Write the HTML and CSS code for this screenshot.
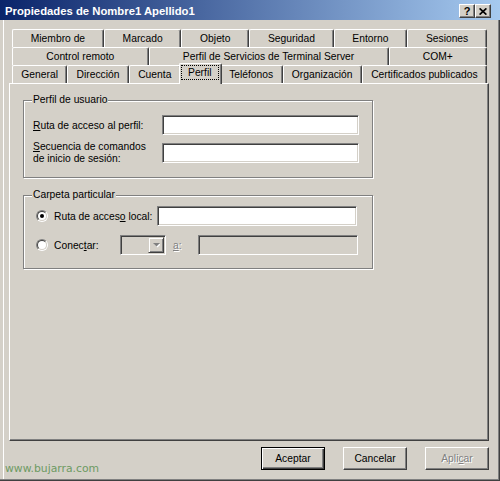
FILE: index.html
```html
<!DOCTYPE html>
<html lang="es">
<head>
<meta charset="utf-8">
<title>Propiedades de Nombre1 Apellido1</title>
<link rel="stylesheet" href="styles.css">
</head>
<body>
<div class="window">
  <div class="titlebar">
    <span class="title">Propiedades de Nombre1 Apellido1</span>
    <div class="tbtns">
      <span class="tbtn">?</span>
      <span class="tbtn"><svg width="8" height="7" viewBox="0 0 8 7"><path d="M0.6 0.4 L7.4 6.6 M7.4 0.4 L0.6 6.6" stroke="#000" stroke-width="1.7"/></svg></span>
    </div>
  </div>

  <div class="tabs">
    <div class="tabrow">
      <div class="tab">Miembro de</div>
      <div class="tab">Marcado</div>
      <div class="tab">Objeto</div>
      <div class="tab">Seguridad</div>
      <div class="tab">Entorno</div>
      <div class="tab">Sesiones</div>
    </div>
    <div class="tabrow">
      <div class="tab">Control remoto</div>
      <div class="tab">Perfil de Servicios de Terminal Server</div>
      <div class="tab">COM+</div>
    </div>
    <div class="tabrow">
      <div class="tab">General</div>
      <div class="tab">Dirección</div>
      <div class="tab">Cuenta</div>
      <div class="tab sel"><span class="focus">Perfil</span></div>
      <div class="tab">Teléfonos</div>
      <div class="tab">Organización</div>
      <div class="tab">Certificados publicados</div>
    </div>
  </div>

  <div class="panel">
    <div class="group g1">
      <span class="legend">Perfil de usuario</span>
      <div class="fields">
        <span class="lbl"><u>R</u>uta de acceso al perfil:</span>
        <div class="input"></div>
        <span class="lbl two"><u>S</u>ecuencia de comandos<br>de inicio de sesión:</span>
        <div class="input"></div>
      </div>
    </div>

    <div class="group g2">
      <span class="legend">Carpeta particular</span>
      <div class="row r1">
        <span class="radio checked"></span>
        <span class="rlabel">Ruta de acces<u>o</u> local:</span>
        <div class="input wide"></div>
      </div>
      <div class="row r2">
        <span class="radio"></span>
        <span class="rlabel">Conec<u>t</u>ar:</span>
        <div class="combo">
          <span class="cbtn"><svg width="7" height="5" viewBox="0 0 7 5"><path d="M1 1 H8 L4.5 4.5 Z" fill="#fff"/><path d="M0 0 H7 L3.5 3.5 Z" fill="#808080"/></svg></span>
        </div>
        <span class="alabel disabled"><u>a</u>:</span>
        <div class="input dis"></div>
      </div>
    </div>
  </div>

  <div class="footer">
    <span class="wm">www.bujarra.com</span>
    <span class="btn default">Aceptar</span>
    <span class="btn">Cancelar</span>
    <span class="btn disabled">Apli<u>c</u>ar</span>
  </div>
</div>
</body>
</html>
```
FILE: styles.css
```css
body {
  margin: 0;
  font-family: "Liberation Sans", Arial, sans-serif;
  font-size: 10.3px;
  color: #000;
  background: #d4d0c8;
}

.window {
  width: 500px;
  height: 481px;
  box-sizing: border-box;
  background: #d4d0c8;
  box-shadow: inset -1px -1px 0 #404040, inset -2px -2px 0 #808080,
              inset 3px 0 0 #d4d0c8, inset 4px 0 0 #fff;
  display: flex;
  flex-direction: column;
  overflow: hidden;
}

.titlebar {
  flex: none;
  height: 20px;
  box-sizing: border-box;
  padding: 2px 9px 0 5px;
  display: flex;
  align-items: center;
  justify-content: space-between;
  background: linear-gradient(to right, #0a246a, #a6caf0);
}

.title {
  color: #fff;
  font-weight: bold;
  font-size: 11.3px;
}

.tbtns {
  display: flex;
}

.tbtn {
  width: 16px;
  height: 14px;
  box-sizing: border-box;
  background: #d4d0c8;
  border: 1px solid;
  border-color: #fff #404040 #404040 #fff;
  box-shadow: inset -1px -1px 0 #808080;
  display: flex;
  align-items: center;
  justify-content: center;
  font-weight: bold;
  font-size: 11px;
  line-height: 1;
}

/* tabs */
.tabs {
  flex: none;
  margin: 9px 0 0 12px;
  width: 475px;
}

.tabrow {
  display: flex;
  height: 18px;
}

.tab {
  flex: 1 1 auto;
  box-sizing: border-box;
  padding: 0 2px;
  background: #d4d0c8;
  border-top: 1px solid #fff;
  border-left: 1px solid #fff;
  border-right: 1px solid #404040;
  box-shadow: inset -1px 0 0 #808080;
  border-radius: 2px 2px 0 0;
  display: flex;
  align-items: center;
  justify-content: center;
  white-space: nowrap;
}

.tab.sel {
  position: relative;
  z-index: 1;
  margin: -2px -2px -1px;
  padding: 1px 2px 4px 1px;
  align-items: stretch;
}

.focus {
  flex: 1;
  border: 1px dotted #000;
  display: flex;
  align-items: center;
  justify-content: center;
}

/* panel */
.panel {
  flex: none;
  margin-left: 9px;
  width: 480px;
  height: 358px;
  box-sizing: border-box;
  border: 1px solid;
  border-color: #fff #404040 #404040 #fff;
  box-shadow: inset -1px -1px 0 #808080;
  padding: 16px 0 0 13px;
}

.group {
  position: relative;
  width: 350px;
  box-sizing: border-box;
  border: 1px solid #808080;
  box-shadow: inset 1px 1px 0 #fff, 1px 1px 0 #fff;
}

.legend {
  position: absolute;
  top: -7px;
  left: 8px;
  padding: 0 1px;
  line-height: 12px;
  background: #d4d0c8;
}

.g1 {
  height: 78px;
  padding: 14px 12px 14px 9px;
}

.fields {
  display: grid;
  grid-template-columns: 129px 197px;
  grid-auto-rows: 20px;
  row-gap: 8px;
  align-items: center;
}

.lbl.two {
  line-height: 12px;
}

.input {
  height: 20px;
  box-sizing: border-box;
  background: #fff;
  border: 1px solid;
  border-color: #808080 #fff #fff #808080;
  box-shadow: inset 1px 1px 0 #404040, inset -1px -1px 0 #d4d0c8;
}

.input.wide {
  width: 200px;
}

.input.dis {
  width: 160px;
  background: #d4d0c8;
}

.g2 {
  margin-top: 17px;
  height: 74px;
  padding: 10px 0 13px 12px;
}

.row {
  display: flex;
  align-items: center;
  height: 20px;
}

.row + .row {
  margin-top: 9px;
}

.radio {
  flex: none;
  position: relative;
  width: 12px;
  height: 12px;
  box-sizing: border-box;
  border-radius: 50%;
  border: 1px solid;
  border-color: #808080 #fff #fff #808080;
  margin-right: 6px;
}

.radio::before {
  content: "";
  position: absolute;
  inset: 0;
  border-radius: 50%;
  box-sizing: border-box;
  border: 1px solid;
  border-color: #404040 #d4d0c8 #d4d0c8 #404040;
  background: #fff;
}

.radio.checked::after {
  content: "";
  position: absolute;
  left: 3px;
  top: 3px;
  width: 4px;
  height: 4px;
  border-radius: 50%;
  background: #000;
}

.r1 .rlabel {
  width: 103px;
}

.r2 .rlabel {
  width: 66px;
}

.combo {
  flex: none;
  width: 46px;
  height: 20px;
  box-sizing: border-box;
  padding: 1px;
  background: #d4d0c8;
  border: 1px solid;
  border-color: #808080 #fff #fff #808080;
  box-shadow: inset 1px 1px 0 #404040, inset -1px -1px 0 #d4d0c8;
  display: flex;
  justify-content: flex-end;
}

.cbtn {
  width: 16px;
  height: 16px;
  box-sizing: border-box;
  border: 1px solid;
  border-color: #d4d0c8 #404040 #404040 #d4d0c8;
  box-shadow: inset 1px 1px 0 #fff, inset -1px -1px 0 #808080;
  display: flex;
  align-items: center;
  justify-content: center;
}

.alabel {
  width: 25px;
  margin-left: 7px;
}

.disabled {
  color: #808080;
  text-shadow: 1px 1px 0 #fff;
}

/* footer */
.footer {
  flex: none;
  display: flex;
  align-items: flex-start;
  padding: 6px 11px 0 5px;
}

.wm {
  margin-right: auto;
  margin-top: 16px;
  font-family: "DejaVu Sans", Verdana, sans-serif;
  font-size: 10.8px;
  line-height: 12px;
  color: #6d9a63;
}

.btn {
  width: 64px;
  height: 23px;
  box-sizing: border-box;
  margin-left: 18px;
  border: 1px solid;
  border-color: #fff #404040 #404040 #fff;
  box-shadow: inset -1px -1px 0 #808080;
  display: flex;
  align-items: center;
  justify-content: center;
}

.btn.default {
  border-color: #000;
  box-shadow: inset 1px 1px 0 #fff, inset -1px -1px 0 #404040, inset -2px -2px 0 #808080;
}
```
